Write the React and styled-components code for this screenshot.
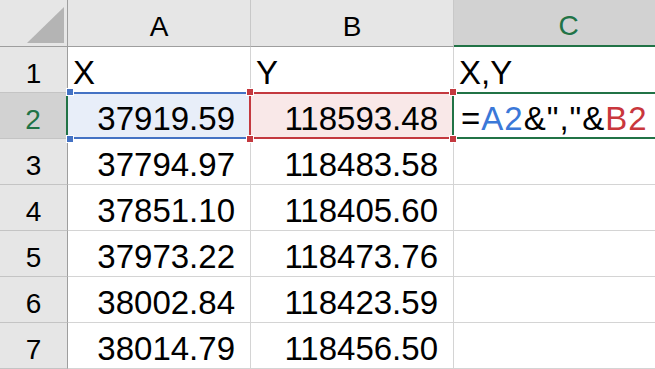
import React from 'react';
import styled, { createGlobalStyle } from 'styled-components';

const GREEN = '#217346';
const BLUE = '#4472c4';
const RED = '#c4393f';

const Global = createGlobalStyle`
  html, body { margin: 0; padding: 0; background: #fff; }
  body { font-family: "Liberation Sans", Arial, sans-serif; }
`;

const Sheet = styled.div`
  display: grid;
  grid-template-columns: 68px 183px 203px 230px;
  grid-template-rows: 47px repeat(7, 46px);
  width: 655px;
  height: 369px;
  overflow: hidden;
  font-family: "Liberation Sans", Arial, sans-serif;
  color: #000;
  background: #fff;
`;

const Corner = styled.div`
  display: flex;
  justify-content: flex-end;
  align-items: flex-end;
  padding: 0 3px 3px 0;
  box-sizing: border-box;
  background: #e6e6e6;
  border-right: 1px solid #9e9e9e;
  border-bottom: 1px solid #9e9e9e;
`;

const CornerTriangle = styled.div`
  width: 37px;
  height: 36px;
  background: #b4b4b4;
  clip-path: polygon(100% 0, 100% 100%, 0 100%);
`;

const ColHeader = styled.div`
  display: flex;
  justify-content: center;
  align-items: flex-end;
  box-sizing: border-box;
  padding-bottom: 3px;
  font-size: 28px;
  line-height: normal;
  background: ${(p) => (p.$active ? '#d2d2d2' : '#e6e6e6')};
  color: ${(p) => (p.$active ? GREEN : '#000')};
  border-right: 1px solid #c8c8c8;
  border-bottom: ${(p) => (p.$active ? `2px solid ${GREEN}` : '1px solid #9e9e9e')};
`;

const RowHeader = styled.div`
  display: flex;
  justify-content: center;
  align-items: flex-end;
  box-sizing: border-box;
  padding-bottom: 2px;
  font-size: 28px;
  line-height: normal;
  background: ${(p) => (p.$active ? '#d2d2d2' : '#e6e6e6')};
  color: ${(p) => (p.$active ? GREEN : '#000')};
  border-right: ${(p) => (p.$active ? `2px solid ${GREEN}` : '1px solid #9e9e9e')};
  border-bottom: 1px solid #c4c4c4;
`;

const Cell = styled.div`
  position: relative;
  display: flex;
  align-items: flex-end;
  justify-content: ${(p) => (p.$right ? 'flex-end' : 'flex-start')};
  box-sizing: border-box;
  padding: ${(p) => (p.$right ? '0 15px 0 0' : '0 0 0 5px')};
  font-size: 33px;
  line-height: normal;
  white-space: nowrap;
  background: ${(p) => p.$bg || '#fff'};
  border-right: 1px solid #d4d4d4;
  border-bottom: 1px solid #d4d4d4;
`;

const CellText = styled.span`
  position: relative;
  z-index: 4;
`;

const FormulaText = styled.span`
  position: relative;
  z-index: 4;
  margin-left: 2px;
  letter-spacing: 1px;
`;

const BlueRange = styled.div`
  position: absolute;
  pointer-events: none;
  z-index: 2;
  top: -1px;
  bottom: -1px;
  left: 2px;
  right: 0;
  border-top: 2px solid ${BLUE};
  border-bottom: 2px solid ${BLUE};
`;

const RedRange = styled.div`
  position: absolute;
  pointer-events: none;
  z-index: 2;
  top: -1px;
  bottom: -1px;
  left: -2px;
  right: -1px;
  border: 2px solid ${RED};
`;

const ActiveBox = styled.div`
  position: absolute;
  pointer-events: none;
  z-index: 2;
  top: -1px;
  bottom: -1px;
  left: -2px;
  right: -20px;
  border: 2px solid ${GREEN};
`;

const Handle = styled.span`
  position: absolute;
  z-index: 3;
  width: 6px;
  height: 6px;
  background: ${(p) => p.$color};
  box-shadow: 0 0 0 1px #fff;
  ${(p) => (p.$side === 'left' ? `left: ${p.$off}px;` : `right: ${p.$off}px;`)}
  ${(p) => (p.$edge === 'top' ? 'top: -4px;' : 'bottom: -4px;')}
`;

const RefA = styled.span`
  color: #3b78d8;
`;
const RefB = styled.span`
  color: #c9373d;
`;

const cols = ['A', 'B', 'C'];
const data = [
  ['37919.59', '118593.48'],
  ['37794.97', '118483.58'],
  ['37851.10', '118405.60'],
  ['37973.22', '118473.76'],
  ['38002.84', '118423.59'],
  ['38014.79', '118456.50'],
];

export default function App() {
  return (
    <>
      <Global />
      <Sheet>
        <Corner>
          <CornerTriangle />
        </Corner>
        {cols.map((c) => (
          <ColHeader key={c} $active={c === 'C'}>
            {c}
          </ColHeader>
        ))}

        <RowHeader>1</RowHeader>
        <Cell>X</Cell>
        <Cell>Y</Cell>
        <Cell>X,Y</Cell>

        {data.map(([x, y], i) => {
          const row = i + 2;
          const sel = row === 2;
          return (
            <React.Fragment key={row}>
              <RowHeader $active={sel}>{row}</RowHeader>
              <Cell $right $bg={sel ? '#e8eef9' : undefined}>
                {sel && (
                  <>
                    <BlueRange />
                    <Handle $color={BLUE} $side="left" $off={-1} $edge="top" />
                    <Handle $color={BLUE} $side="left" $off={-1} $edge="bottom" />
                  </>
                )}
                <CellText>{x}</CellText>
              </Cell>
              <Cell $right $bg={sel ? '#f9e8e8' : undefined}>
                {sel && (
                  <>
                    <RedRange />
                    <Handle $color={RED} $side="left" $off={-4} $edge="top" />
                    <Handle $color={RED} $side="left" $off={-4} $edge="bottom" />
                    <Handle $color={RED} $side="right" $off={-3} $edge="top" />
                    <Handle $color={RED} $side="right" $off={-3} $edge="bottom" />
                  </>
                )}
                <CellText>{y}</CellText>
              </Cell>
              <Cell>
                {sel && (
                  <>
                    <ActiveBox />
                    <FormulaText>
                      =<RefA>A2</RefA>&amp;","&amp;<RefB>B2</RefB>
                    </FormulaText>
                  </>
                )}
              </Cell>
            </React.Fragment>
          );
        })}
      </Sheet>
    </>
  );
}
